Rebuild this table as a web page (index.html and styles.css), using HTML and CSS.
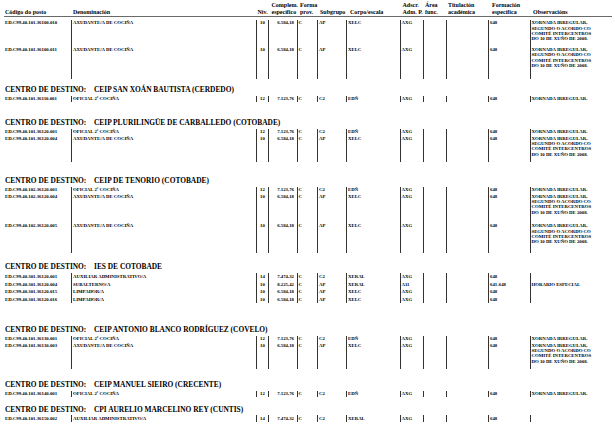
FILE: index.html
```html
<!DOCTYPE html>
<html lang="gl">
<head>
<meta charset="utf-8">
<title>Relación de postos</title>
<link rel="stylesheet" href="styles.css">
</head>
<body>
<div class="page">
  <div class="thead">
    <div class="th c-code">Código do posto</div>
    <div class="th c-den">Denominación</div>
    <div class="th c-niv">Niv.</div>
    <div class="th c-comp">Complem.<br>específico</div>
    <div class="th c-forma">Forma<br>prov.</div>
    <div class="th c-sub">Subgrupo</div>
    <div class="th c-corpo">Corpo/escala</div>
    <div class="th c-adscr">Adscr.<br>Adm. P.</div>
    <div class="th c-area">Área<br>func.</div>
    <div class="th c-tit">Titulación<br>académica</div>
    <div class="th c-form">Formación<br>específica</div>
    <div class="th c-obs">Observacións</div>
  </div>

  <div class="group first">
    <div class="row tall">
      <div class="td code">ED.C99.40.101.36100.010</div><div class="td den">AXUDANTE/A DE COCIÑA</div><div class="td niv">10</div><div class="td comp">6.584,18</div><div class="td forma">C</div><div class="td sub">AP</div><div class="td corpo">XELC</div><div class="td adscr">AXG</div><div class="td area"></div><div class="td tit"></div><div class="td form">648</div><div class="td obs">XORNADA IRREGULAR,<br>SEGUNDO O ACORDO CO<br>COMITÉ INTERCENTROS<br>DO 10 DE XUÑO DE 2008.</div>
    </div>
    <div class="row tall ext">
      <div class="td code">ED.C99.40.101.36100.011</div><div class="td den">AXUDANTE/A DE COCIÑA</div><div class="td niv">10</div><div class="td comp">6.584,18</div><div class="td forma">C</div><div class="td sub">AP</div><div class="td corpo">XELC</div><div class="td adscr">AXG</div><div class="td area"></div><div class="td tit"></div><div class="td form">648</div><div class="td obs">XORNADA IRREGULAR,<br>SEGUNDO O ACORDO CO<br>COMITÉ INTERCENTROS<br>DO 10 DE XUÑO DE 2008.</div>
    </div>
  </div>

  <section class="centro gap-cerdedo">
    <h2 class="centro-title"><span class="lbl">CENTRO DE DESTINO:</span><span class="nome">CEIP SAN XOÁN BAUTISTA (CERDEDO)</span></h2>
    <div class="group">
      <div class="row">
        <div class="td code">ED.C99.40.101.36110.001</div><div class="td den">OFICIAL 2ª COCIÑA</div><div class="td niv">12</div><div class="td comp">7.123,76</div><div class="td forma">C</div><div class="td sub">C2</div><div class="td corpo">EDÑ</div><div class="td adscr">AXG</div><div class="td area"></div><div class="td tit"></div><div class="td form">648</div><div class="td obs">XORNADA IRREGULAR.</div>
      </div>
    </div>
  </section>

  <section class="centro gap-carballedo">
    <h2 class="centro-title"><span class="lbl">CENTRO DE DESTINO:</span><span class="nome">CEIP PLURILINGÜE DE CARBALLEDO (COTOBADE)</span></h2>
    <div class="group">
      <div class="row">
        <div class="td code">ED.C99.40.101.36120.001</div><div class="td den">OFICIAL 2ª COCIÑA</div><div class="td niv">12</div><div class="td comp">7.123,76</div><div class="td forma">C</div><div class="td sub">C2</div><div class="td corpo">EDÑ</div><div class="td adscr">AXG</div><div class="td area"></div><div class="td tit"></div><div class="td form">648</div><div class="td obs">XORNADA IRREGULAR.</div>
      </div>
      <div class="row tall">
        <div class="td code">ED.C99.40.101.36120.004</div><div class="td den">AXUDANTE/A DE COCIÑA</div><div class="td niv">10</div><div class="td comp">6.584,18</div><div class="td forma">C</div><div class="td sub">AP</div><div class="td corpo">XELC</div><div class="td adscr">AXG</div><div class="td area"></div><div class="td tit"></div><div class="td form">648</div><div class="td obs">XORNADA IRREGULAR,<br>SEGUNDO O ACORDO CO<br>COMITÉ INTERCENTROS<br>DO 10 DE XUÑO DE 2008.</div>
      </div>
    </div>
  </section>

  <section class="centro gap-tenorio">
    <h2 class="centro-title"><span class="lbl">CENTRO DE DESTINO:</span><span class="nome">CEIP DE TENORIO (COTOBADE)</span></h2>
    <div class="group">
      <div class="row">
        <div class="td code">ED.C99.40.102.36120.001</div><div class="td den">OFICIAL 2ª COCIÑA</div><div class="td niv">12</div><div class="td comp">7.123,76</div><div class="td forma">C</div><div class="td sub">C2</div><div class="td corpo">EDÑ</div><div class="td adscr">AXG</div><div class="td area"></div><div class="td tit"></div><div class="td form">648</div><div class="td obs">XORNADA IRREGULAR.</div>
      </div>
      <div class="row tall roomy">
        <div class="td code">ED.C99.40.102.36120.004</div><div class="td den">AXUDANTE/A DE COCIÑA</div><div class="td niv">10</div><div class="td comp">6.584,18</div><div class="td forma">C</div><div class="td sub">AP</div><div class="td corpo">XELC</div><div class="td adscr">AXG</div><div class="td area"></div><div class="td tit"></div><div class="td form">648</div><div class="td obs">XORNADA IRREGULAR,<br>SEGUNDO O ACORDO CO<br>COMITÉ INTERCENTROS<br>DO 10 DE XUÑO DE 2008.</div>
      </div>
      <div class="row tall roomy">
        <div class="td code">ED.C99.40.102.36120.005</div><div class="td den">AXUDANTE/A DE COCIÑA</div><div class="td niv">10</div><div class="td comp">6.584,18</div><div class="td forma">C</div><div class="td sub">AP</div><div class="td corpo">XELC</div><div class="td adscr">AXG</div><div class="td area"></div><div class="td tit"></div><div class="td form">648</div><div class="td obs">XORNADA IRREGULAR,<br>SEGUNDO O ACORDO CO<br>COMITÉ INTERCENTROS<br>DO 10 DE XUÑO DE 2008.</div>
      </div>
    </div>
  </section>

  <section class="centro gap-ies">
    <h2 class="centro-title"><span class="lbl">CENTRO DE DESTINO:</span><span class="nome">IES DE COTOBADE</span></h2>
    <div class="group loose">
      <div class="row">
        <div class="td code">ED.C99.40.301.36120.001</div><div class="td den">AUXILIAR ADMINISTRATIVO/A</div><div class="td niv">14</div><div class="td comp">7.474,32</div><div class="td forma">C</div><div class="td sub">C2</div><div class="td corpo">XERAL</div><div class="td adscr">AXG</div><div class="td area"></div><div class="td tit"></div><div class="td form">648</div><div class="td obs"></div>
      </div>
      <div class="row">
        <div class="td code">ED.C99.40.301.36120.004</div><div class="td den">SUBALTERNO/A</div><div class="td niv">10</div><div class="td comp">8.225,42</div><div class="td forma">C</div><div class="td sub">AP</div><div class="td corpo">XERAL</div><div class="td adscr">A11</div><div class="td area"></div><div class="td tit"></div><div class="td form">641-648</div><div class="td obs">HORARIO ESPECIAL</div>
      </div>
      <div class="row">
        <div class="td code">ED.C99.40.301.36120.015</div><div class="td den">LIMPADOR/A</div><div class="td niv">10</div><div class="td comp">6.584,18</div><div class="td forma">C</div><div class="td sub">AP</div><div class="td corpo">XELC</div><div class="td adscr">AXG</div><div class="td area"></div><div class="td tit"></div><div class="td form">648</div><div class="td obs"></div>
      </div>
      <div class="row">
        <div class="td code">ED.C99.40.301.36120.016</div><div class="td den">LIMPADOR/A</div><div class="td niv">10</div><div class="td comp">6.584,18</div><div class="td forma">C</div><div class="td sub">AP</div><div class="td corpo">XELC</div><div class="td adscr">AXG</div><div class="td area"></div><div class="td tit"></div><div class="td form">648</div><div class="td obs"></div>
      </div>
    </div>
  </section>

  <section class="centro gap-covelo">
    <h2 class="centro-title"><span class="lbl">CENTRO DE DESTINO:</span><span class="nome">CEIP ANTONIO BLANCO RODRÍGUEZ (COVELO)</span></h2>
    <div class="group">
      <div class="row">
        <div class="td code">ED.C99.40.101.36130.001</div><div class="td den">OFICIAL 2ª COCIÑA</div><div class="td niv">12</div><div class="td comp">7.123,76</div><div class="td forma">C</div><div class="td sub">C2</div><div class="td corpo">EDÑ</div><div class="td adscr">AXG</div><div class="td area"></div><div class="td tit"></div><div class="td form">648</div><div class="td obs">XORNADA IRREGULAR.</div>
      </div>
      <div class="row tall">
        <div class="td code">ED.C99.40.101.36130.003</div><div class="td den">AXUDANTE/A DE COCIÑA</div><div class="td niv">10</div><div class="td comp">6.584,18</div><div class="td forma">C</div><div class="td sub">AP</div><div class="td corpo">XELC</div><div class="td adscr">AXG</div><div class="td area"></div><div class="td tit"></div><div class="td form">648</div><div class="td obs">XORNADA IRREGULAR,<br>SEGUNDO O ACORDO CO<br>COMITÉ INTERCENTROS<br>DO 10 DE XUÑO DE 2008.</div>
      </div>
    </div>
  </section>

  <section class="centro gap-crecente">
    <h2 class="centro-title"><span class="lbl">CENTRO DE DESTINO:</span><span class="nome">CEIP MANUEL SIEIRO (CRECENTE)</span></h2>
    <div class="group">
      <div class="row">
        <div class="td code">ED.C99.40.101.36140.001</div><div class="td den">OFICIAL 2ª COCIÑA</div><div class="td niv">12</div><div class="td comp">7.123,76</div><div class="td forma">C</div><div class="td sub">C2</div><div class="td corpo">EDÑ</div><div class="td adscr">AXG</div><div class="td area"></div><div class="td tit"></div><div class="td form">648</div><div class="td obs">XORNADA IRREGULAR.</div>
      </div>
    </div>
  </section>

  <section class="centro gap-cuntis">
    <h2 class="centro-title"><span class="lbl">CENTRO DE DESTINO:</span><span class="nome">CPI AURELIO MARCELINO REY (CUNTIS)</span></h2>
    <div class="group">
      <div class="row">
        <div class="td code">ED.C99.40.101.36150.002</div><div class="td den">AUXILIAR ADMINISTRATIVO/A</div><div class="td niv">14</div><div class="td comp">7.474,32</div><div class="td forma">C</div><div class="td sub">C2</div><div class="td corpo">XERAL</div><div class="td adscr">AXG</div><div class="td area"></div><div class="td tit"></div><div class="td form">648</div><div class="td obs"></div>
      </div>
    </div>
  </section>
</div>
</body>
</html>
```

FILE: styles.css
```css
* { box-sizing: border-box; }

html, body {
  margin: 0;
  padding: 0;
  background: #ffffff;
  color: #000000;
  font-family: "Liberation Serif", "Times New Roman", serif;
  font-weight: bold;
}

.page {
  width: 615px;
  height: 439px;
  overflow: hidden;
  padding: 0 3px 0 4px;
}

/* shared column grid */
.thead,
.row {
  display: grid;
  grid-template-columns: 67px 185px 12px 29px 20px 29px 54px 23px 23px 42px 42px 1fr;
}

/* header */
.thead {
  padding-top: 1.5px;
  font-size: 6px;
  line-height: 7px;
  border-bottom: 1px solid #6a6a6a;
}
.th {
  align-self: end;
  white-space: nowrap;
}
.th.c-code { padding-left: 1px; }
.th.c-den { padding-left: 2px; }
.th.c-niv { padding-left: 1.5px; }
.th.c-comp { padding-left: 3.5px; }
.th.c-forma { padding-left: 3px; }
.th.c-sub { padding-left: 3px; }
.th.c-corpo { padding-left: 4px; }
.th.c-adscr { padding-left: 2.5px; }
.th.c-area { padding-left: 2px; }
.th.c-tit { padding-left: 2px; }
.th.c-form { padding-left: 4px; }
.th.c-obs { padding-left: 3px; }

/* body rows */
.group.first { margin-top: 3.3px; }

.row {
  font-size: 4.8px;
  line-height: 5.33px;
  height: 6.33px;
}
.row.tall { height: 26.8px; }
.row.tall.ext { height: 32.6px; }
.row.tall.roomy { height: 29.8px; }
.group.loose .row { height: 7.5px; }

.td {
  padding-top: 0.5px;
  white-space: nowrap;
  overflow: visible;
  border-left: 1px solid #333333;
}
.group.loose .td { padding-top: 1.1px; }

.td.code { border-left: 0; padding-left: 1px; }
.td.den { padding-left: 1px; }
.td.niv { text-align: center; }
.td.comp { text-align: right; padding-right: 3px; }
.td.forma { padding-left: 0.5px; }
.td.sub { padding-left: 1px; }
.td.corpo { padding-left: 1px; }
.td.adscr { padding-left: 0.5px; }
.td.form { padding-left: 1px; }
.td.obs { padding-left: 0.5px; }

/* centre headings */
.centro-title {
  margin: 0 0 1.8px 0;
  padding-left: 1px;
  display: flex;
  font-size: 7.4px;
  line-height: 8px;
  font-weight: bold;
  white-space: nowrap;
}
.centro-title .lbl { width: 89px; }

.centro.gap-cerdedo { margin-top: 6.8px; }
.centro.gap-carballedo { margin-top: 17px; }
.centro.gap-tenorio { margin-top: 15px; }
.centro.gap-ies { margin-top: 10.5px; }
.centro.gap-covelo { margin-top: 23px; }
.centro.gap-crecente { margin-top: 12px; }
.centro.gap-cuntis { margin-top: 8.5px; }
```
